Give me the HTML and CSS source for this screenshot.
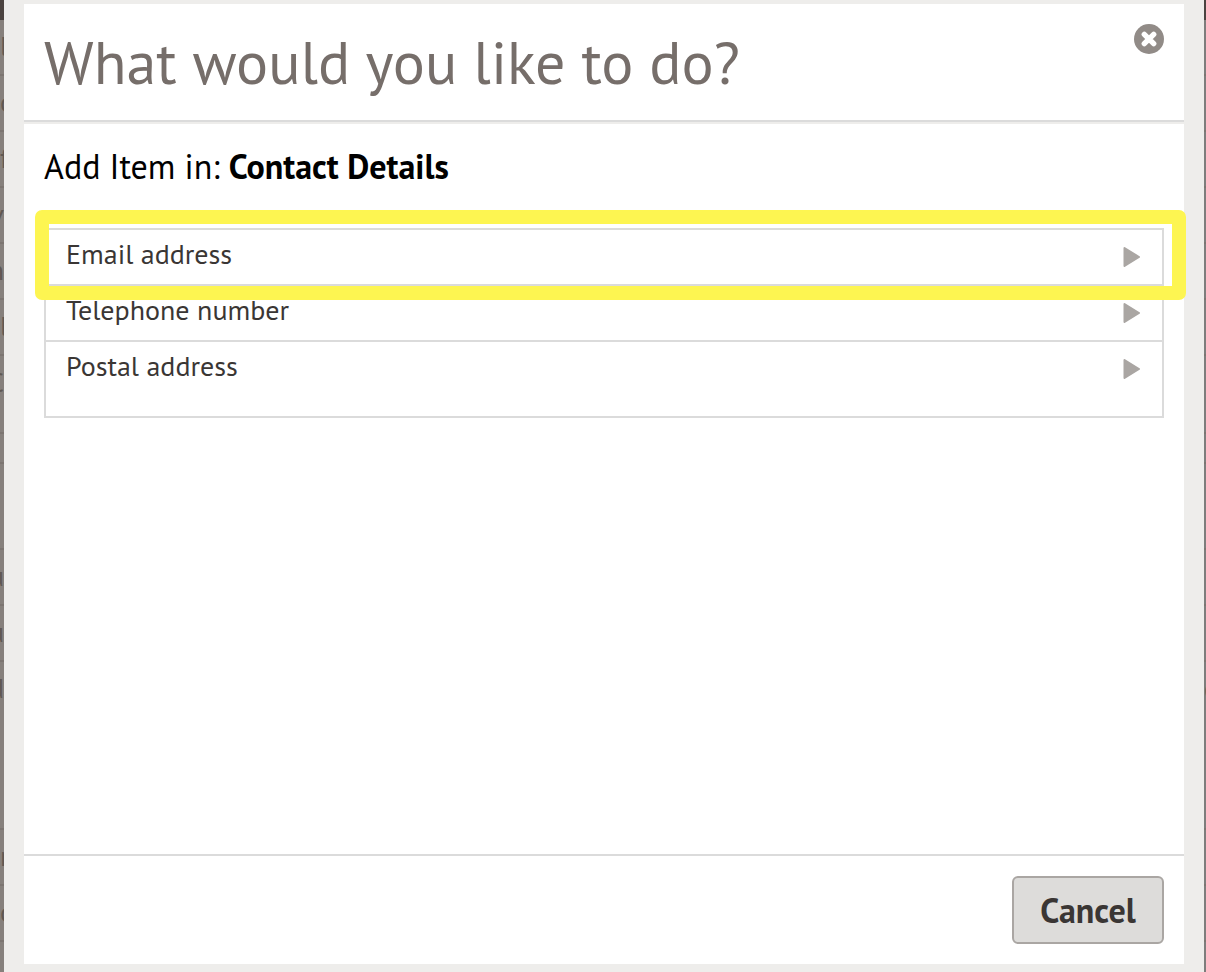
FILE: index.html
```
<!DOCTYPE html>
<html lang="en">

<head>
    <meta charset="UTF-8" />
    <meta name="viewport" content="width=device-width, initial-scale=1" />
    <title>What would you like to do?</title>
    <link rel="stylesheet" href="styles.css">
</head>

<body>
    <div class="page">
        <!-- dimmed page behind the dialog -->
        <div class="behind" aria-hidden="true">
            <div class="behind-top"></div>
            <div class="behind-row">l</div>
            <div class="behind-row">c</div>
            <div class="behind-row">f</div>
            <div class="behind-row end">v</div>
            <div class="behind-row end">n</div>
            <div class="behind-row">l</div>
            <div class="behind-row last end">C</div>
            <div class="behind-row short"></div>
            <div class="behind-row heading"></div>
            <div class="behind-row end">u</div>
            <div class="behind-row end">u</div>
            <div class="behind-row tall end">d</div>
            <div class="behind-row">r</div>
            <div class="behind-row">c</div>
        </div>

        <div class="modal" role="dialog" aria-labelledby="title">
            <div class="modal-header">
                <h1 id="title">What would you like to do?</h1>
                <button type="button" class="close" aria-label="Close">
                    <svg width="30" height="30" viewBox="0 0 30 30">
                        <circle cx="15" cy="15" r="15" fill="#918b87" />
                        <path d="M10.3 10.3 L19.7 19.7 M19.7 10.3 L10.3 19.7" stroke="#fff" stroke-width="5.4" stroke-linecap="round" />
                    </svg>
                </button>
            </div>
            <div class="modal-body">
                <h2>Add Item in: <strong>Contact Details</strong></h2>
                <ul class="items">
                    <li class="highlight">
                        <a href="#">Email address
                            <svg width="18" height="20" viewBox="0 0 18 20"><path d="M1.5 1 L16 10 L1.5 19 Z" /></svg>
                        </a>
                    </li>
                    <li>
                        <a href="#">Telephone number
                            <svg width="18" height="20" viewBox="0 0 18 20"><path d="M1.5 1 L16 10 L1.5 19 Z" /></svg>
                        </a>
                    </li>
                    <li>
                        <a href="#">Postal address
                            <svg width="18" height="20" viewBox="0 0 18 20"><path d="M1.5 1 L16 10 L1.5 19 Z" /></svg>
                        </a>
                    </li>
                </ul>
            </div>
            <div class="modal-footer">
                <button type="button" class="cancel">Cancel</button>
            </div>
        </div>

        <div class="behind right" aria-hidden="true">
            <div class="behind-top"></div>
            <div class="behind-row"></div>
            <div class="behind-row"></div>
            <div class="behind-row"></div>
            <div class="behind-row"></div>
            <div class="behind-row"></div>
            <div class="behind-row"></div>
            <div class="behind-row last"></div>
            <div class="behind-row short"></div>
            <div class="behind-row heading"></div>
            <div class="behind-row"></div>
            <div class="behind-row"></div>
            <div class="behind-row tall">c</div>
            <div class="behind-row"></div>
            <div class="behind-row"></div>
        </div>
    </div>
</body>

</html>
```
FILE: styles.css
```
* {
    margin: 0;
    padding: 0;
    box-sizing: border-box;
}

body {
    font-family: "PT Sans", Lato, "Noto Sans", sans-serif;
    color: #3a3634;
    background: #eeedeb;
}

.page {
    display: grid;
    grid-template-columns: 4px 1fr 2px;
    height: 100vh;
}

.behind {
    overflow: hidden;
    background: #86807c;
    color: #605853;
    font-size: 28px;
}

.behind.right {
    background: #7e7d7c;
}

.behind-top {
    height: 20px;
    background: #4b4340;
}

.behind-row {
    display: flex;
    height: 56px;
    line-height: 52px;
    border-bottom: 2px solid #7c7571;
}

.behind-row.end {
    justify-content: flex-end;
}

.behind-row.last {
    height: 78px;
}

.behind-row.short {
    height: 30px;
}

.behind-row.heading {
    height: 86px;
}

.behind-row.tall {
    height: 168px;
}

.modal {
    display: flex;
    flex-direction: column;
    padding: 4px 20px 8px;
    background: #eeedeb;
}

.modal-header {
    display: flex;
    justify-content: space-between;
    align-items: flex-start;
    padding: 20px;
    background: #fff;
    border-bottom: 2px solid #dbdbdb;
}

.modal-header h1 {
    font-size: 60px;
    font-weight: normal;
    line-height: 76px;
    color: #766e6a;
}

.close {
    width: 30px;
    height: 30px;
    border: 0;
    background: none;
    cursor: pointer;
}

.close svg {
    display: block;
}

.modal-body {
    flex: 1;
    margin-top: 2px;
    padding: 20px;
    background: #fff;
}

.modal-body h2 {
    margin-bottom: 40px;
    font-size: 34px;
    font-weight: normal;
    line-height: 44px;
    color: #000;
}

.items {
    list-style: none;
    padding-bottom: 20px;
    border: 2px solid #dbdbdb;
}

.items li {
    position: relative;
}

.items li + li {
    border-top: 2px solid #dbdbdb;
}

.items a {
    display: flex;
    justify-content: space-between;
    height: 54px;
    padding: 0 21px 0 20px;
    font-size: 28px;
    line-height: 48px;
    color: #3a3634;
    text-decoration: none;
}

.items svg {
    align-self: center;
    fill: #aaa6a3;
    stroke: #aaa6a3;
    stroke-width: 2;
    stroke-linejoin: round;
}

/* yellow marker around the item */
.highlight::after {
    content: "";
    position: absolute;
    z-index: 1;
    top: -20px;
    right: -24px;
    bottom: -16px;
    left: -11px;
    border: 14px solid #fdf551;
    border-radius: 7px;
    pointer-events: none;
}

.modal-footer {
    display: flex;
    justify-content: flex-end;
    padding: 20px;
    background: #fff;
    border-top: 2px solid #dbdbdb;
}

.cancel {
    min-width: 152px;
    height: 68px;
    padding: 0 26px;
    font-family: inherit;
    font-size: 34px;
    font-weight: bold;
    color: #3a3634;
    background: #dddcda;
    border: 2px solid #aaa6a3;
    border-radius: 6px;
    cursor: pointer;
}
```
